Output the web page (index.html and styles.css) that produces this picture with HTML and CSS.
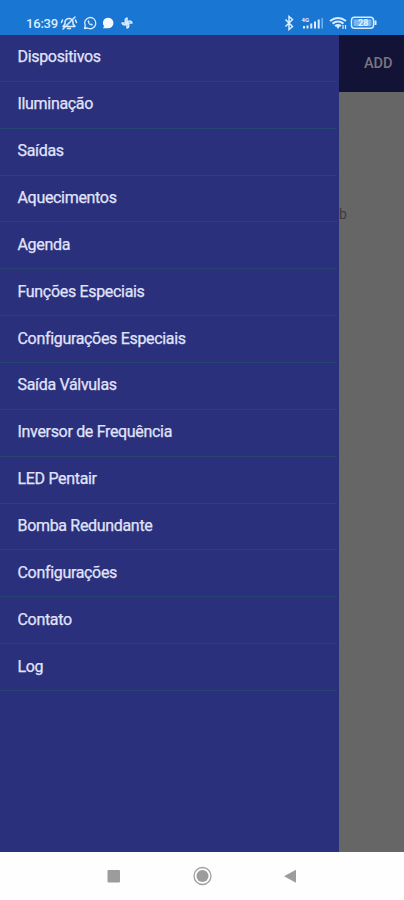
FILE: index.html
```html
<!DOCTYPE html>
<html lang="pt-BR">
<head>
<meta charset="utf-8">
<title>Menu</title>
<link rel="stylesheet" href="styles.css">
</head>
<body>
<div class="phone">
  <header class="status">
    <span class="clock">16:39</span>
    <svg class="status-icons" width="76" height="16" viewBox="0 0 76 16" fill="none" stroke="#d9edff" stroke-width="1.5" stroke-linecap="round" stroke-linejoin="round">
      <path d="M3 11.5 5 9V6.500Q6 3.500 9 3.500Q12 3.500 13 6.500V9L15 11.500ZM7.500 13.500H10.500M3 14 15 2M1.500 7.500 2.500 5M15.500 5 16.500 7.500"/>
      <path d="M24.500 13.500 25.300 10.800A5.600 5.600 0 1 1 27.500 13Z" stroke-width="1.300"/>
      <path d="M27.800 6Q28 10 32.200 10.500L32.500 9.300 31 8.600 30.200 9.300 28.900 7.800 29.500 7 28.800 5.500Z" fill="#d9edff" stroke-width=".3"/>
      <path d="M43 13.300 44 11.300A5.300 5.300 0 1 1 47 13.200Z" fill="#f2f9ff" stroke="none"/>
      <path d="M67 8V3A2.600 2.600 0 0 0 67 8H72A2.600 2.600 0 0 0 67 8V13A2.600 2.600 0 0 0 67 8H62A2.600 2.600 0 0 0 67 8" stroke-width="1.500"/>
    </svg>
    <svg class="status-right" width="94" height="16" viewBox="0 0 94 16" fill="none" stroke="#d9edff" stroke-width="1.500">
      <path d="M1.500 4.500 8.500 11.500 5 14.500V1.500L8.500 4.500 1.500 11.500"/>
      <path d="M20 13.500V11M23.500 13.500V10.500M27.300 13.500V8.500M31 13.500V6.500M34.700 13.500V4.500" stroke-width="2"/>
      <path d="M38.200 13.500V3" stroke="#75b4ed"/>
      <path d="M46 6Q54 0 62 6M48.500 8.600Q54 4.500 59.500 8.600M51 11Q54 8.800 57 11" stroke-width="2"/>
      <path d="m52 11 2 3 2-3Z" fill="#d9edff" stroke="none"/>
      <path d="M59 10V14M61.500 14V10" stroke-width="1.200"/>
      <rect x="67.500" y="2.200" width="22" height="11" rx="3"/>
      <rect x="69.500" y="4.200" width="18" height="7" rx="1" fill="#78b6ee" stroke="none"/>
      <path d="M91.500 5.500V10" stroke-width="2"/>
      <text class="net" x="17.500" y="6.500">4G</text>
      <text class="charge" x="74" y="10.700">28</text>
    </svg>
  </header>
  <div class="app">
    <nav class="drawer">
      <ul class="menu">
        <li>Dispositivos</li>
        <li>Iluminação</li>
        <li>Saídas</li>
        <li>Aquecimentos</li>
        <li>Agenda</li>
        <li>Funções Especiais</li>
        <li>Configurações Especiais</li>
        <li>Saída Válvulas</li>
        <li>Inversor de Frequência</li>
        <li>LED Pentair</li>
        <li>Bomba Redundante</li>
        <li>Configurações</li>
        <li>Contato</li>
        <li>Log</li>
      </ul>
    </nav>
    <main class="page">
      <div class="toolbar">ADD</div>
      <p class="label">b</p>
    </main>
  </div>
  <footer class="navbar">
    <svg width="404" height="48" viewBox="0 0 404 48">
      <rect x="107.500" y="18" width="12.500" height="12.500" rx="1" fill="#9c9c9c"/>
      <circle cx="202.500" cy="24" r="8.500" fill="none" stroke="#a0a0a0" stroke-width="1.300"/>
      <circle cx="202.500" cy="24" r="6" fill="#9c9c9c"/>
      <path d="M284 24.300 296 17.800V30.800Z" fill="#9c9c9c"/>
    </svg>
  </footer>
</div>
</body>
</html>
```
FILE: styles.css
```css
* {
  box-sizing: border-box;
}

body {
  margin: 0;
  font-family: Roboto, "Liberation Sans", sans-serif;
}

.phone {
  display: flex;
  flex-direction: column;
  width: 404px;
  height: 900px;
  overflow: hidden;
}

.status {
  display: flex;
  flex: 0 0 35px;
  align-items: flex-start;
  padding: 15px 26px 0;
  background: #1976d2;
  color: #d9edff;
}

.clock {
  width: 34px;
  font-size: 13px;
  font-weight: 500;
  line-height: 17px;
  letter-spacing: -0.2px;
}

.status-right {
  margin-left: auto;
}

.net,
.charge {
  fill: #e6f3ff;
  stroke: none;
  font-weight: 700;
}

.net {
  font-size: 6px;
}

.charge {
  font-size: 9px;
}

.app {
  display: flex;
  flex: 1;
}

.drawer {
  width: 339px;
  background: #2b307c;
}

.menu {
  margin: 0;
  padding: 0 2px 0 0;
  list-style: none;
}

.menu li {
  display: flex;
  align-items: center;
  height: 46.87px;
  padding: 0 0 2px 17.500px;
  border-bottom: 1px solid #28456f;
  color: #e0e4fb;
  font-size: 16px;
  font-weight: 400;
  letter-spacing: -0.32px;
  -webkit-text-stroke: 0.25px #e0e4fb;
}

.page {
  flex: 1;
  background: #666;
}

.toolbar {
  display: flex;
  align-items: center;
  height: 57px;
  padding-left: 25px;
  background: #131338;
  color: #77777f;
  font-size: 14.500px;
  font-weight: 500;
}

.label {
  margin: 113px 0 0;
  color: #3d3d3d;
  font-size: 14px;
  line-height: 18px;
}

.navbar {
  flex: 0 0 48px;
  background: #fefefe;
}

.navbar svg {
  display: block;
}
```
